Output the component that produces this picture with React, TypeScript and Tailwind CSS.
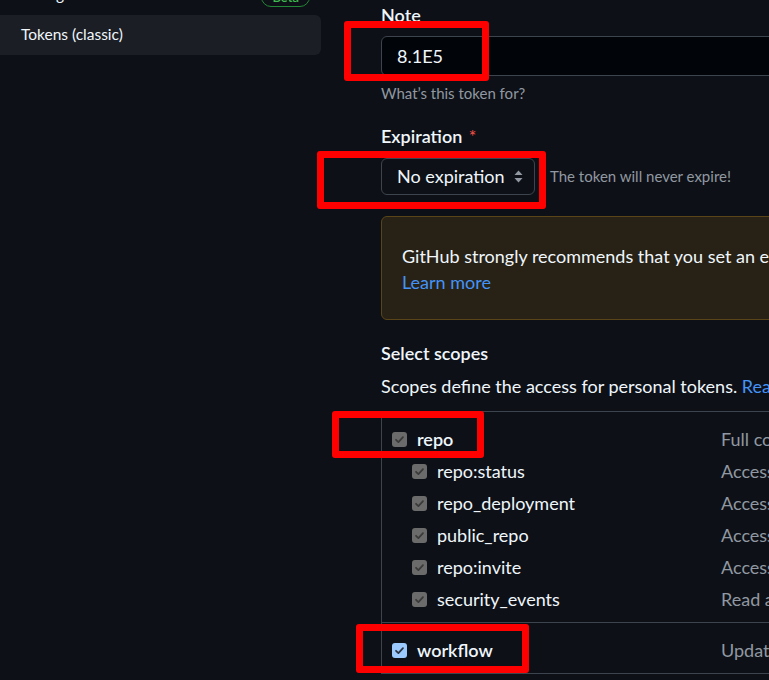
import React from 'react';

const font = "font-['Lato','Liberation_Sans',sans-serif]";

function Check({ blue = false }: { blue?: boolean }) {
  return (
    <span
      className={`flex h-[15px] w-[15px] shrink-0 items-center justify-center rounded-[3px] ${
        blue ? 'bg-[#9ccaff]' : 'bg-[#6b6b6b]'
      }`}
    >
      <svg width="11" height="11" viewBox="0 0 12 12" fill="none">
        <path
          d="M2.2 6.3 4.8 8.8 9.8 3.4"
          stroke={blue ? '#2b3240' : '#3a3a3a'}
          strokeWidth="1.9"
          strokeLinecap="round"
          strokeLinejoin="round"
        />
      </svg>
    </span>
  );
}

const subScopes = [
  { name: 'repo:status', desc: 'Access commit status' },
  { name: 'repo_deployment', desc: 'Access deployment status' },
  { name: 'public_repo', desc: 'Access public repositories' },
  { name: 'repo:invite', desc: 'Access repository invitations' },
  { name: 'security_events', desc: 'Read and write security events' },
];

// red annotation boxes drawn on top of the screenshot
const marks = [
  'left-[344px] top-[21px] w-[145px] h-[60px]',
  'left-[317px] top-[151px] w-[229px] h-[58px]',
  'left-[332px] top-[411px] w-[152px] h-[47px]',
  'left-[356px] top-[624px] w-[173px] h-[49px]',
];

export default function App() {
  return (
    <div className={`relative flex h-[680px] w-[769px] overflow-hidden bg-[#0d1117] ${font}`}>
      {/* sidebar */}
      <div className="-mt-[21px] flex w-[321px] shrink-0 flex-col">
        <div className="flex h-9 items-center justify-between pl-[21px] pr-[11px] text-[15.5px] text-[#f0f6fc]">
          <span className="-mt-1">Fine-grained tokens</span>
          <span className="rounded-full border border-[#238636] px-[10px] text-[13px] leading-[18px] font-semibold text-[#3fb950]">
            Beta
          </span>
        </div>
        <div className="flex h-10 items-center rounded-r-md bg-[#1b1f25] pl-[21px] text-[15.5px] text-[#f0f6fc]">
          Tokens (classic)
        </div>
      </div>

      {/* main form */}
      <div className="ml-[60px] flex w-[700px] shrink-0 flex-col pt-[3px] text-[18px] text-[#f0f6fc]">
        <div className="leading-6 font-semibold">Note</div>
        <div className="mt-[9px] flex h-10 items-center rounded-md border border-[#3d444d] bg-[#010409] px-[15px]">
          8.1E5
        </div>
        <div className="mt-[7px] text-[15px] leading-5 text-[#9198a1]">What’s this token for?</div>

        <div className="mt-[21px] leading-6 font-semibold">
          Expiration <span className="ml-0.5 font-normal text-[#f85149]">*</span>
        </div>
        <div className="mt-[10px] flex items-center">
          <div className="flex h-[37px] w-[154px] items-center justify-between rounded-md border border-[#3d444d] pr-[11px] pl-[15px]">
            <span>No expiration</span>
            <svg width="9" height="13" viewBox="0 0 9 13">
              <path d="M4.5 0.5 8.5 5H0.5Z" fill="#9198a1" />
              <path d="M4.5 12.5 8.5 8H0.5Z" fill="#9198a1" />
            </svg>
          </div>
          <span className="ml-[15px] text-[15px] text-[#9198a1]">The token will never expire!</span>
        </div>

        <div className="mt-[21px] rounded-md border border-[#5a4518] bg-[#272215] px-5 pt-[26px] pb-[24px] leading-[26px]">
          <div className="whitespace-nowrap">
            GitHub strongly recommends that you set an expiration date for your token to help keep your
            information secure.
          </div>
          <div className="text-[#4493f8]">Learn more</div>
        </div>

        <div className="mt-[21px] leading-6 font-semibold">Select scopes</div>
        <div className="mt-[9px] leading-6 whitespace-nowrap">
          Scopes define the access for personal tokens.{' '}
          <span className="text-[#4493f8]">Read more about OAuth scopes.</span>
        </div>

        <div className="mt-[13px] border-t border-l border-[#3d444d]">
          <div className="border-b border-[#3d444d] px-[10px] pt-[11px] pb-[7px]">
            <div className="flex h-8 items-center">
              <div className="flex w-[329px] items-center gap-[10px] font-semibold">
                <Check />
                repo
              </div>
              <span className="whitespace-nowrap text-[#9198a1]">Full control of private repositories</span>
            </div>
            {subScopes.map((s) => (
              <div key={s.name} className="flex h-8 items-center">
                <div className="flex w-[329px] items-center gap-[10px] pl-5">
                  <Check />
                  {s.name}
                </div>
                <span className="whitespace-nowrap text-[#9198a1]">{s.desc}</span>
              </div>
            ))}
          </div>
          <div className="border-b border-[#3d444d] px-[10px] pt-[11px] pb-[7px]">
            <div className="flex h-8 items-center">
              <div className="flex w-[329px] items-center gap-[10px] font-semibold">
                <Check blue />
                workflow
              </div>
              <span className="whitespace-nowrap text-[#9198a1]">Update GitHub Action workflows</span>
            </div>
          </div>
        </div>
      </div>

      {marks.map((m) => (
        <div key={m} className={`pointer-events-none absolute rounded-[3px] border-[7px] border-[#ff0000] ${m}`} />
      ))}
    </div>
  );
}
